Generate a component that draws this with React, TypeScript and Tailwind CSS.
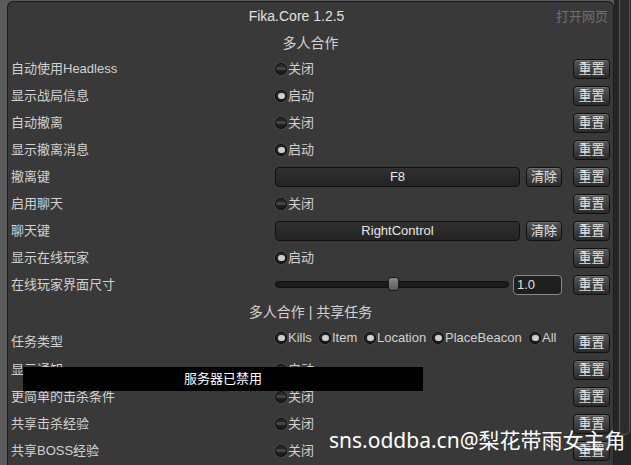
import React from "react";

const font = { fontFamily: '"Liberation Sans", "Noto Sans CJK SC", sans-serif' };

const ResetButton = () => (
    <button className="w-[37px] h-[20px] rounded-[4px] border border-[#101010] bg-gradient-to-b from-[#575757] to-[#2b2b2b] text-[13px] leading-none text-[#e4e4e4] shadow-[inset_0_1px_0_rgba(255,255,255,0.15)] shrink-0">
        重置
    </button>
);

const Radio = ({ on, label }: { on: boolean; label: string }) => (
    <div className="flex items-center">
        <div className="relative w-[12px] h-[12px] rounded-full border border-[#0e0e0e] bg-gradient-to-b from-[#2a2a2a] to-[#1a1a1a] flex items-center justify-center shadow-[0_0_0_1px_rgba(255,255,255,0.06)]">
            {on ? (
                <div className="w-[7px] h-[6px] rounded-full bg-[#cfcfcf]" />
            ) : (
                <div className="w-[10px] h-[3px] bg-[#444] rounded-full" />
            )}
        </div>
        <span className="ml-[1px]">{label}</span>
    </div>
);

const Row = ({ label, children }: { label: string; children?: React.ReactNode }) => (
    <div className="flex items-center h-[27px]">
        <div className="w-[264px] shrink-0">{label}</div>
        <div className="flex-1 flex items-center">{children}</div>
        <div className="ml-[11px]">
            <ResetButton />
        </div>
    </div>
);

const KeyField = ({ value }: { value: string }) => (
    <div className="flex items-center w-full">
        <div className="flex-1 h-[20px] rounded-[4px] border border-[#111] bg-gradient-to-b from-[#303030] to-[#232323] flex items-center justify-center text-[#e8e8e8]">
            {value}
        </div>
        <button className="ml-[6px] w-[36px] h-[20px] rounded-[4px] border border-[#101010] bg-gradient-to-b from-[#575757] to-[#2b2b2b] text-[13px] leading-none text-[#e4e4e4] shadow-[inset_0_1px_0_rgba(255,255,255,0.15)]">
            清除
        </button>
    </div>
);

const App = () => {
    return (
        <div className="relative w-[631px] h-[465px] overflow-hidden flex bg-[#5b5b5b] text-[13px] text-[#d2d2d2]" style={font}>
            <div className="w-[7px] shrink-0" />
            <div className="w-[607px] shrink-0 mt-[1px] rounded-t-[6px] border border-b-0 border-[#1c1c1c] bg-[#393939] px-[3px]">
                <div className="relative h-[29px] flex items-center justify-center text-[#e2e2e2] text-[14px] pr-[28px]">
                    Fika.Core 1.2.5
                    <span className="absolute right-[2px] text-[#707070] text-[13px]">打开网页</span>
                </div>
                <div className="h-[24px] flex items-center justify-center text-[14px]">多人合作</div>
                <Row label="自动使用Headless"><Radio on={false} label="关闭" /></Row>
                <Row label="显示战局信息"><Radio on={true} label="启动" /></Row>
                <Row label="自动撤离"><Radio on={false} label="关闭" /></Row>
                <Row label="显示撤离消息"><Radio on={true} label="启动" /></Row>
                <Row label="撤离键"><KeyField value="F8" /></Row>
                <Row label="启用聊天"><Radio on={false} label="关闭" /></Row>
                <Row label="聊天键"><KeyField value="RightControl" /></Row>
                <Row label="显示在线玩家"><Radio on={true} label="启动" /></Row>
                <Row label="在线玩家界面尺寸">
                    <div className="flex items-center w-full">
                        <div className="relative flex-1 h-[7px] rounded-full border border-[#0f0f0f] bg-[#1b1b1b]">
                            <div className="absolute left-[112px] top-[-5px] w-[11px] h-[14px] rounded-[3px] border border-[#1a1a1a] bg-gradient-to-b from-[#8a8a8a] to-[#5a5a5a]" />
                        </div>
                        <div className="ml-[4px] w-[49px] h-[20px] rounded-[4px] border border-[#8a8a8a] bg-[#1f1f1f] flex items-center px-[3px] text-[#e0e0e0]">
                            1.0
                        </div>
                    </div>
                </Row>
                <div className="h-[28px] flex items-center justify-center text-[14px]">多人合作 | 共享任务</div>
                <div className="flex items-center h-[30px]">
                    <div className="w-[264px] shrink-0 pt-[2px]">任务类型</div>
                    <div className="flex-1 flex items-center mb-[6px]">
                        <div className="w-[44px]"><Radio on={true} label="Kills" /></div>
                        <div className="w-[45px]"><Radio on={true} label="Item" /></div>
                        <div className="w-[68px]"><Radio on={true} label="Location" /></div>
                        <div className="w-[97px]"><Radio on={true} label="PlaceBeacon" /></div>
                        <Radio on={true} label="All" />
                    </div>
                    <div className="ml-[11px] pt-[3px]">
                        <ResetButton />
                    </div>
                </div>
                <Row label="显示通知"><Radio on={true} label="启动" /></Row>
                <Row label="更简单的击杀条件"><Radio on={false} label="关闭" /></Row>
                <Row label="共享击杀经验"><Radio on={false} label="关闭" /></Row>
                <Row label="共享BOSS经验"><Radio on={false} label="关闭" /></Row>
            </div>
            <div className="flex-1 bg-[#262626] flex justify-end pr-[1px]">
                <div className="mt-[-4px] w-[11px] h-[439px] rounded-b-[5px] border border-[#5a5a5a] bg-[#2c2c2c]" />
            </div>

            <div className="absolute left-[23px] top-[367px] w-[400px] h-[24px] bg-black flex items-center justify-center text-white text-[13px]">
                服务器已禁用
            </div>
            <div
                className="absolute left-[329px] top-[430px] text-white text-[21px] leading-none whitespace-nowrap"
                style={{ fontFamily: '"Noto Sans", "Noto Sans CJK SC", sans-serif' }}
            >
                sns.oddba.cn@梨花带雨女主角
            </div>
        </div>
    );
};

export default App;
